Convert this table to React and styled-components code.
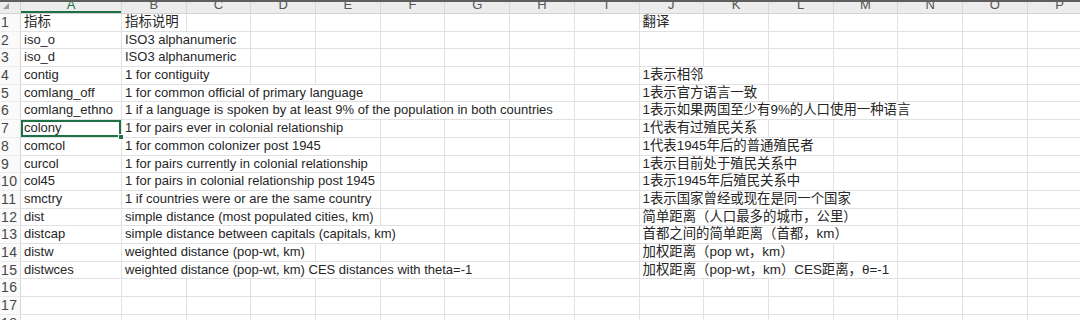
import React from 'react';
import styled, { createGlobalStyle, css } from 'styled-components';

const COL_W = 64.7;
const TEMPLATE = `21px 101px repeat(15, ${COL_W}px)`;
const LETTERS = 'ABCDEFGHIJKLMNOP'.split('');
const ROW_H = 17.7;
const GRID = '#e1e1e1';

const GlobalStyle = createGlobalStyle`
  html, body { margin: 0; padding: 0; background: #ffffff; overflow: hidden; }
  #root { width: 1080px; height: 320px; }
`;

const Sheet = styled.div`
  width: 1080px;
  height: 320px;
  overflow: hidden;
  background: #ffffff;
  border-top: 2px solid #5e5e5e;
  box-sizing: border-box;
  font-family: "Liberation Sans", Arial, "Noto Sans CJK SC", sans-serif;
  color: #262626;
`;

const HeaderRow = styled.div`
  display: grid;
  grid-template-columns: ${TEMPLATE};
  height: 11px;
  background: #ececec;
  border-bottom: 1px solid #d2d2d2;
  box-sizing: content-box;
`;

const Corner = styled.div`
  position: relative;
  border-right: 1px solid #d2d2d2;
  display: flex;
  align-items: flex-start;
  padding: 1px 0 0 3px;
`;

const ColHead = styled.div`
  border-right: 1px solid #d8d8d8;
  font-size: 13px;
  line-height: 6px;
  height: 11px;
  overflow: hidden;
  text-align: center;
  color: #555;
  box-sizing: border-box;
  ${(p) =>
    p.$active &&
    css`
      box-shadow: inset 0 -2px 0 #1e7145;
      color: #1e7145;
    `}
`;

const Row = styled.div`
  display: grid;
  grid-template-columns: ${TEMPLATE};
  height: ${ROW_H}px;
`;

const RowNum = styled.div`
  background: #fafafa;
  border-right: 1px solid #d6d6d6;
  border-bottom: 1px solid #ececec;
  font-size: 14px;
  letter-spacing: 0.4px;
  line-height: ${ROW_H}px;
  color: #474747;
  padding-left: 1px;
  overflow: hidden;
  white-space: nowrap;
`;

const Cell = styled.div`
  position: relative;
  grid-column: span ${(p) => p.$span || 1};
  border-right: 1px solid ${GRID};
  border-bottom: 1px solid ${GRID};
  padding: 0 3px;
  font-size: ${(p) => (p.$cjk ? '13.4px' : '13px')};
  line-height: ${ROW_H - 1}px;
  white-space: nowrap;
  overflow: hidden;
  min-width: 0;
  ${(p) =>
    p.$selected &&
    css`
      overflow: visible;
      box-shadow: inset 0 0 0 2px #1e7145;
      &::after {
        content: '';
        position: absolute;
        right: -3px;
        bottom: -3px;
        width: 4px;
        height: 4px;
        background: #1e7145;
        border: 1px solid #ffffff;
        z-index: 2;
      }
    `}
`;

const cjk = (t) => /[\u3000-\u9fff\uff00-\uffef]/.test(t);

// each row: map of column index -> [text, span]
const DATA = [
  { 0: ['指标'], 1: ['指标说明'], 9: ['翻译'] },
  { 0: ['iso_o'], 1: ['ISO3 alphanumeric', 2] },
  { 0: ['iso_d'], 1: ['ISO3 alphanumeric', 2] },
  { 0: ['contig'], 1: ['1 for contiguity', 2], 9: ['1表示相邻', 2] },
  { 0: ['comlang_off'], 1: ['1 for common official of primary language', 4], 9: ['1表示官方语言一致', 2] },
  {
    0: ['comlang_ethno'],
    1: ['1 if a language is spoken by at least 9% of the population in both countries', 7],
    9: ['1表示如果两国至少有9%的人口使用一种语言', 5],
  },
  { 0: ['colony'], 1: ['1 for pairs ever in colonial relationship', 4], 9: ['1代表有过殖民关系', 2] },
  { 0: ['comcol'], 1: ['1 for common colonizer post 1945', 4], 9: ['1代表1945年后的普通殖民者', 3] },
  { 0: ['curcol'], 1: ['1 for pairs currently in colonial relationship', 4], 9: ['1表示目前处于殖民关系中', 3] },
  { 0: ['col45'], 1: ['1 for pairs in colonial relationship post 1945', 4], 9: ['1表示1945年后殖民关系中', 3] },
  { 0: ['smctry'], 1: ['1 if countries were or are the same country', 4], 9: ['1表示国家曾经或现在是同一个国家', 4] },
  { 0: ['dist'], 1: ['simple distance (most populated cities, km)', 4], 9: ['简单距离（人口最多的城市，公里）', 4] },
  { 0: ['distcap'], 1: ['simple distance between capitals (capitals, km)', 5], 9: ['首都之间的简单距离（首都，km）', 4] },
  { 0: ['distw'], 1: ['weighted distance (pop-wt, km)', 3], 9: ['加权距离（pop wt，km）', 3] },
  {
    0: ['distwces'],
    1: ['weighted distance (pop-wt, km) CES distances with theta=-1', 6],
    9: ['加权距离（pop-wt，km）CES距离，θ=-1', 4],
  },
  {},
  {},
  {},
];

const SELECTED = { row: 6, col: 0 };

function CornerMark() {
  return (
    <svg width="6" height="6" viewBox="0 0 6 6">
      <path d="M6 0 L6 6 L0 6 Z" fill="#9a9a9a" />
    </svg>
  );
}

function SheetRow({ index, data }) {
  const cells = [];
  let c = 0;
  while (c < LETTERS.length) {
    const entry = data[c];
    const span = entry ? Math.min(entry[1] || 1, LETTERS.length - c) : 1;
    const text = entry ? entry[0] : '';
    cells.push(
      <Cell
        key={c}
        $span={span}
        $cjk={cjk(text)}
        $selected={SELECTED.row === index && SELECTED.col === c}
      >
        {text}
      </Cell>
    );
    c += span;
  }
  return (
    <Row>
      <RowNum>{index + 1}</RowNum>
      {cells}
    </Row>
  );
}

export default function App() {
  return (
    <>
      <GlobalStyle />
      <Sheet>
        <HeaderRow>
          <Corner>
            <CornerMark />
          </Corner>
          {LETTERS.map((l, i) => (
            <ColHead key={l} $active={i === SELECTED.col}>
              {l}
            </ColHead>
          ))}
        </HeaderRow>
        {DATA.map((d, i) => (
          <SheetRow key={i} index={i} data={d} />
        ))}
      </Sheet>
    </>
  );
}
